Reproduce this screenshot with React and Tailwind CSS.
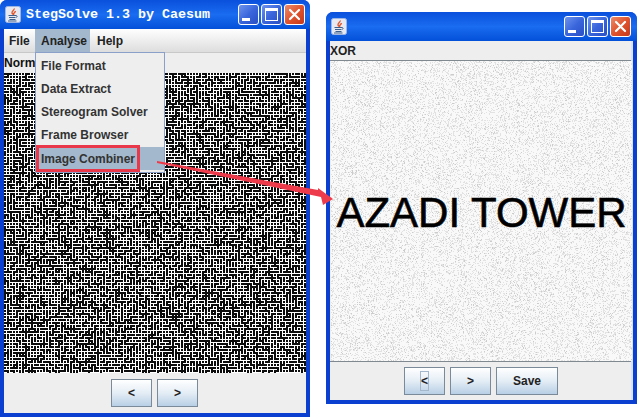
import React, { useMemo } from 'react'

// small seeded random so the textures stay the same between runs
function makeRandom(seed) {
    let s = seed;
    return () => {
        s = (s + 0x6d2b79f5) | 0;
        let t = Math.imul(s ^ (s >>> 15), 1 | s);
        t = (t + Math.imul(t ^ (t >>> 7), 61 | t)) ^ t;
        return ((t ^ (t >>> 14)) >>> 0) / 4294967296;
    };
}

function cellsToPath(cols, rows, size, isOn) {
    let d = '';
    for (let y = 0; y < rows; y++) {
        let run = 0;
        for (let x = 0; x <= cols; x++) {
            if (x < cols && isOn(x, y)) {
                run++;
            } else if (run > 0) {
                d += `M${(x - run) * size} ${y * size}h${run * size}v${size}h${-run * size}z`;
                run = 0;
            }
        }
    }
    return d;
}

const MazeTexture = () => {
    // lattice: one corner always black, the opposite always white, the walls between are random
    const d = useMemo(() => {
        const rnd = makeRandom(7);
        return cellsToPath(202, 200, 1.5, (x, y) => {
            if (x % 2 === 0 && y % 2 === 0) return true;
            if (x % 2 === 1 && y % 2 === 1) return false;
            return rnd() < 0.36;
        });
    }, []);
    return (
        <svg width="302" height="300" className="block bg-white" shapeRendering="crispEdges">
            <path d={d} fill="#0c0c0c" />
        </svg>
    );
};

const NoiseTexture = () => {
    const [light, dark] = useMemo(() => {
        const rnd = makeRandom(11);
        return [
            cellsToPath(301, 300, 1, () => rnd() < 0.26),
            cellsToPath(301, 300, 1, () => rnd() < 0.04),
        ];
    }, []);
    return (
        <svg width="301" height="300" className="absolute inset-0 bg-[#f9f9f9]" shapeRendering="crispEdges">
            <path d={light} fill="#e2e2e2" />
            <path d={dark} fill="#cccccc" />
        </svg>
    );
};

const JavaIcon = () => (
    <svg width="16" height="17" viewBox="0 0 16 17" className="block">
        <rect x="0.5" y="0.5" width="15" height="16" rx="2" fill="#e6e9f2" stroke="#9fb4e0" />
        <path d="M9 2.500c1 1.500-2.500 2.500-2 4.500 .2 .8 1 1.200 1.500 1.500-.5-1 1.500-2 2-3.500" fill="none" stroke="#e2562a" strokeWidth="1.400" />
        <path d="M3.500 9.500h7.500c1.500 0 1.500 2-.5 2M4 11.500h6M4.500 13.500h6M3 15h8.500" fill="none" stroke="#3d5f8c" strokeWidth="1" />
    </svg>
);

const CaptionButton = ({ kind }) => {
    const tone = kind === 'close'
        ? 'bg-gradient-to-br from-[#ec8a6a] via-[#e0532c] to-[#c5381a]'
        : 'bg-gradient-to-br from-[#6f93ec] via-[#3a66dc] to-[#2a4fc4]';
    return (
        <div className={`w-[21px] h-[21px] rounded-[3px] border border-white flex items-center justify-center ${tone}`}>
            {kind === 'min' && <div className="w-[8px] h-[3px] bg-white mt-[9px] mr-[5px]" />}
            {kind === 'max' && <div className="w-[13px] h-[13px] border border-white border-t-[3px]" />}
            {kind === 'close' && (
                <svg width="13" height="13" viewBox="0 0 13 13">
                    <path d="M2 2l9 9M11 2l-9 9" stroke="#fff" strokeWidth="2.200" strokeLinecap="round" />
                </svg>
            )}
        </div>
    );
};

const TitleBar = ({ title, padRight }) => (
    <div className={`h-[29px] shrink-0 flex items-center pl-[5px] ${padRight} rounded-t-[7px] bg-gradient-to-b from-[#0a50dc] via-[#1a6cf0] to-[#0350d8]`}>
        <JavaIcon />
        <span className="ml-[5px] text-white font-bold text-[13.33px] font-['Liberation_Mono',monospace] whitespace-nowrap">{title}</span>
        <div className="ml-auto flex gap-[2px]">
            <CaptionButton kind="min" />
            <CaptionButton kind="max" />
            <CaptionButton kind="close" />
        </div>
    </div>
);

const OceanButton = ({ children, width = 'w-[41px]', focused }) => (
    <button className={`${width} h-[28px] flex items-center justify-center border border-[#7a8a99] bg-gradient-to-b from-white via-[#e4edf5] to-[#b8cfe5] text-[12px] font-bold text-[#222]`}>
        {focused ? <span className="w-[9px] h-[20px] border border-[#a3b8cc] flex items-center justify-center">{children}</span> : children}
    </button>
);

const MenuItem = ({ label, active }) => (
    <div className={`h-[23px] pl-[5px] flex items-center ${active ? 'bg-[#a3b8cc] mt-[1px]' : ''}`}>{label}</div>
);

export default function App() {
    return (
        <div className="relative w-[640px] h-[418px] overflow-hidden bg-white flex items-start font-['Liberation_Sans',sans-serif] text-[12px] font-bold text-[#333]">
            {/* StegSolve main window */}
            <div className="w-[310px] h-[417px] flex flex-col bg-[#0a3fd0] rounded-t-[7px] relative">
                <TitleBar title="StegSolve 1.3 by Caesum" padRight="pr-[5px]" />
                <div className="flex-1 mx-[4px] mb-[4px] w-[302px] bg-[#eeeeee] flex flex-col">
                    <div className="h-[24px] shrink-0 flex bg-gradient-to-b from-white to-[#dddddd] border-b border-[#c8c8c8] text-[#222]">
                        <span className="pl-[5px] pr-[6px] w-[31px] flex items-center">File</span>
                        <span className="w-[55px] pl-[6px] flex items-center bg-[#a3b8cc]">Analyse</span>
                        <span className="pl-[7px] flex items-center">Help</span>
                    </div>
                    <div className="h-[20px] shrink-0 flex items-center text-[#111]">Norm</div>
                    <MazeTexture />
                    <div className="flex-1 flex items-center justify-center gap-[5px] pr-[1px]">
                        <OceanButton>&lt;</OceanButton>
                        <OceanButton>&gt;</OceanButton>
                    </div>
                </div>
                {/* Analyse drop down */}
                <div className="absolute left-[35px] top-[52px] w-[130px] h-[121px] bg-[#eeeeee] border border-[#8aa0c8] text-[#333] pt-[1px]">
                    <MenuItem label="File Format" />
                    <MenuItem label="Data Extract" />
                    <MenuItem label="Stereogram Solver" />
                    <MenuItem label="Frame Browser" />
                    <MenuItem label="Image Combiner" active />
                    <div className="absolute left-0 top-[92px] w-[104px] h-[27px] border-[3px] border-[#e8384a]" />
                </div>
            </div>

            {/* XOR result window */}
            <div className="w-[311px] h-[392px] ml-[16px] mt-[12px] flex flex-col bg-[#0a3fd0] rounded-t-[7px]">
                <TitleBar title="" padRight="pr-[6px]" />
                <div className="flex-1 mx-[4px] mb-[4px] bg-[#eeeeee] flex flex-col border-r-2 border-[#d8e4f4]">
                    <div className="h-[20px] shrink-0 flex items-center text-[#222] border-b border-[#808890]">XOR</div>
                    <div className="relative w-[301px] h-[300px] shrink-0 ml-[1px] flex items-center justify-center">
                        <NoiseTexture />
                        <span className="relative top-[2px] text-[42px] font-normal leading-none text-black whitespace-nowrap [-webkit-text-stroke:0.6px_black]">AZADI TOWER</span>
                    </div>
                    <div className="flex-1 flex items-center justify-center gap-[5px] pl-[1px] border-t border-[#808890]">
                        <OceanButton focused>&lt;</OceanButton>
                        <OceanButton>&gt;</OceanButton>
                        <OceanButton width="w-[62px]">Save</OceanButton>
                    </div>
                </div>
            </div>

            {/* annotation arrow */}
            <svg className="absolute inset-0 pointer-events-none" width="640" height="418">
                <polygon points="157,161 318,190 318,188 333,199 323,205 321,197 157,163" fill="#ee3b4b" />
            </svg>
        </div>
    )
}
